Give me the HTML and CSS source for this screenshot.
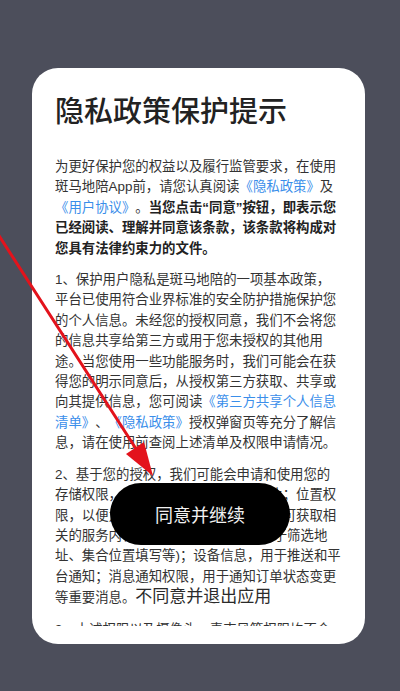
FILE: index.html
```html
<!DOCTYPE html>
<html lang="zh-CN">
<head>
    <meta charset="UTF-8">
    <meta name="viewport" content="width=device-width, initial-scale=1.0">
    <title>隐私政策保护提示</title>
    <link rel="stylesheet" href="styles.css">
</head>
<body>
    <div class="dialog">
        <h1 class="dialog-title">隐私政策保护提示</h1>
        <div class="dialog-body">
            <p>为更好保护您的权益以及履行监管要求，在使用斑马地陪App前，请您认真阅读<a class="link">《隐私政策》</a>及<a class="link">《用户协议》</a>。<b>当您点击“同意”按钮，即表示您已经阅读、理解并同意该条款，该条款将构成对您具有法律约束力的文件。</b></p>
            <p>1、保护用户隐私是斑马地陪的一项基本政策，平台已使用符合业界标准的安全防护措施保护您的个人信息。未经您的授权同意，我们不会将您的信息共享给第三方或用于您未授权的其他用途。当您使用一些功能服务时，我们可能会在获得您的明示同意后，从授权第三方获取、共享或向其提供信息，您可阅读<a class="link">《第三方共享个人信息清单》</a>、<a class="link">《隐私政策》</a>授权弹窗页等充分了解信息，请在使用前查阅上述清单及权限申请情况。</p>
            <p>2、基于您的授权，我们可能会申请和使用您的存储权限，用于保存及上传头像和图片；位置权限，以便为您推荐附近的地陪及景点，可获取相关的服务内容与附近推荐(包括但不限于筛选地址、集合位置填写等)；设备信息，用于推送和平台通知；消息通知权限，用于通知订单状态变更等重要消息。<a class="decline">不同意并退出应用</a></p>
            <p>3、上述权限以及摄像头、麦克风等权限均不会默认开启，只有经过您的明示授权才会在为实现特定功能或服务时使用。</p>
        </div>
        <button class="agree-btn">同意并继续</button>
    </div>

    <!-- annotation arrow drawn over the screenshot -->
    <svg class="arrow" viewBox="0 0 400 691" width="400" height="691">
        <line x1="-4" y1="231" x2="140" y2="455" stroke="#e3131c" stroke-width="3" stroke-linecap="round"/>
        <polygon points="153,476 126,454 144,442" fill="#e3131c"/>
    </svg>
</body>
</html>
```

FILE: styles.css
```css
* {
    margin: 0;
    padding: 0;
    box-sizing: border-box;
}

body {
    height: 691px;
    overflow: hidden;
    padding-top: 68px;
    background: #4c4e5b;
    font-family: 'Liberation Sans', 'Noto Sans CJK SC', sans-serif;
    color: #333;
    text-spacing-trim: space-all;
}

.dialog {
    position: relative;
    display: flex;
    flex-direction: column;
    width: 333px;
    height: 576px;
    margin-left: 32px;
    padding: 24px 22px 18px 23px;
    background: #fff;
    border-radius: 26px;
}

.dialog-title {
    font-size: 29px;
    line-height: 40px;
    font-weight: 500;
    color: #222;
    white-space: nowrap;
}

.dialog-body {
    flex: 1;
    overflow: hidden;
    margin-top: 25px;
    font-size: 13.4px;
    line-height: 20.4px;
}

.dialog-body p {
    margin-bottom: 11px;
}

.dialog-body b {
    font-weight: 700;
    color: #222;
}

.link {
    color: #3a8eea;
}

.decline {
    font-size: 17px;
    color: #2a2a2a;
}

.agree-btn {
    position: absolute;
    left: 78px;
    top: 415px;
    width: 180px;
    height: 62px;
    border: none;
    border-radius: 31px;
    background: #000;
    color: #f0f0f0;
    font-family: 'Noto Sans CJK SC', sans-serif;
    font-size: 18px;
}

.arrow {
    position: absolute;
    top: 0;
    left: 0;
    pointer-events: none;
}
```
